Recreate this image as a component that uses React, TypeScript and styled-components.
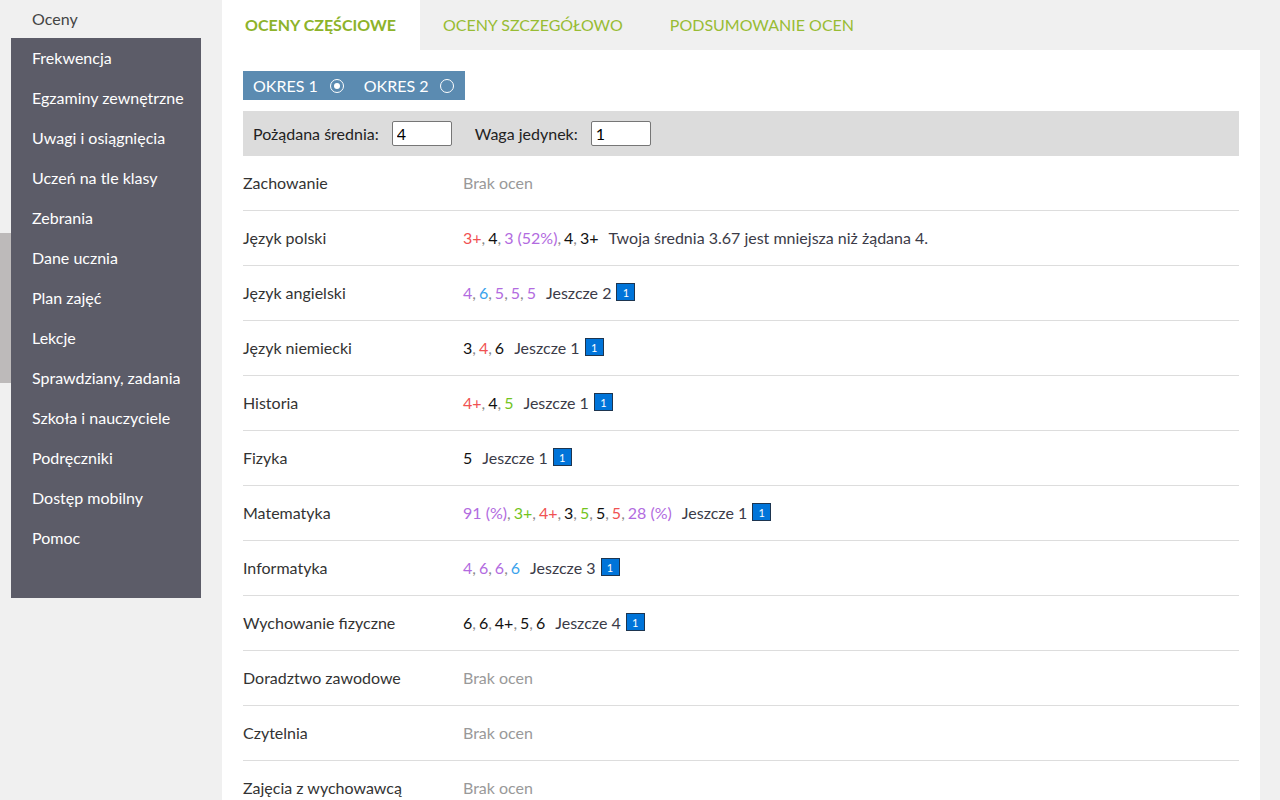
import React from "react";
import styled, { createGlobalStyle } from "styled-components";

const Global = createGlobalStyle`
  html, body { margin: 0; padding: 0; background: #f0f0f0; }
  body { font-family: Lato, "Noto Sans", Arial, sans-serif; color: #333; }
  * { box-sizing: border-box; }
`;

const Page = styled.div`
  display: flex;
  align-items: flex-start;
  min-height: 800px;
`;

const SideWrap = styled.div`
  display: flex;
  width: 222px;
  flex-shrink: 0;
`;

const Handle = styled.div`
  width: 11px;
  height: 150px;
  margin-top: 233px;
  background: #bdbaba;
  flex-shrink: 0;
`;

const Menu = styled.nav`
  width: 190px;
  display: flex;
  flex-direction: column;
`;

const ActiveItem = styled.div`
  height: 38px;
  display: flex;
  align-items: center;
  padding: 0 0 2px 21px;
  font-size: 16px;
  color: #444;
`;

const DarkBlock = styled.div`
  background: #5c5c68;
  padding-bottom: 40px;
  display: flex;
  flex-direction: column;
`;

const MenuItem = styled.div`
  height: 40px;
  display: flex;
  align-items: center;
  padding: 0 0 2px 21px;
  font-size: 16px;
  color: #fff;
`;

const Main = styled.main`
  width: 1038px;
  display: flex;
  flex-direction: column;
`;

const Tabs = styled.div`
  display: flex;
  height: 50px;
`;

const Tab = styled.div<{ $active?: boolean }>`
  height: 50px;
  display: flex;
  align-items: center;
  padding: 0 24px 2px 23px;
  font-size: 16px;
  text-transform: uppercase;
  color: ${(p) => (p.$active ? "#8db32a" : "#98bc34")};
  font-weight: ${(p) => (p.$active ? 700 : 400)};
  background: ${(p) => (p.$active ? "#fff" : "transparent")};
`;

const Panel = styled.div`
  background: #fff;
  padding: 21px 21px 0 21px;
  display: flex;
  flex-direction: column;
`;

const OkresBar = styled.div`
  align-self: flex-start;
  background: #5b8bb1;
  height: 29px;
  display: flex;
  align-items: center;
  padding: 0 11px 0 10px;
  gap: 20px;
  color: #fff;
  font-size: 16px;
`;

const Okres = styled.label`
  display: flex;
  align-items: center;
  gap: 12px;
`;

const Radio = styled.span<{ $checked?: boolean }>`
  width: 14px;
  height: 14px;
  border-radius: 50%;
  border: 1.6px solid #fff;
  display: flex;
  align-items: center;
  justify-content: center;
  &::after {
    content: "";
    width: 6px;
    height: 6px;
    border-radius: 50%;
    background: ${(p) => (p.$checked ? "#fff" : "transparent")};
  }
`;

const FilterBar = styled.div`
  margin-top: 11px;
  background: #dcdcdc;
  height: 45px;
  display: flex;
  align-items: center;
  padding: 0 10px;
  font-size: 16px;
  color: #222;
`;

const Field = styled.label`
  display: flex;
  align-items: center;
  gap: 13px;
  margin-right: 23px;
`;

const Input = styled.input`
  width: 60px;
  height: 25px;
  border: 1px solid #767676;
  border-radius: 2px;
  background: #fff;
  font-family: Lato, Arial, sans-serif;
  font-size: 16px;
  padding: 0 4px;
  color: #000;
`;

const Row = styled.div`
  display: flex;
  align-items: center;
  height: 55px;
  padding-bottom: 2px;
  border-bottom: 1px solid #dddddd;
  font-size: 16px;
`;

const Subject = styled.div`
  width: 220px;
  flex-shrink: 0;
  color: #333;
`;

const Grades = styled.div`
  display: flex;
  align-items: center;
`;

const Grade = styled.span<{ $c: string }>`
  color: ${(p) => p.$c};
`;

const Sep = styled.span`
  color: #8a8a8a;
  margin-right: 3px;
`;

const Info = styled.span`
  color: #3b3b48;
  margin-left: 10px;
`;

const Empty = styled.span`
  color: #999;
`;

const Badge = styled.span`
  margin-left: 5px;
  width: 19px;
  height: 18px;
  background: #0074d9;
  border: 1px solid #1d3550;
  color: #fff;
  font-size: 11px;
  display: inline-flex;
  align-items: center;
  justify-content: center;
  line-height: 1;
`;

const R = "#f05252";
const K = "#111";
const P = "#b26be0";
const B = "#3aa3ec";
const G = "#73c41d";

type G_ = [string, string];
type Subj = { name: string; grades?: G_[]; info?: string; badge?: boolean };

const subjects: Subj[] = [
  { name: "Zachowanie" },
  {
    name: "Język polski",
    grades: [["3+", R], ["4", K], ["3 (52%)", P], ["4", K], ["3+", K]],
    info: "Twoja średnia 3.67 jest mniejsza niż żądana 4.",
  },
  { name: "Język angielski", grades: [["4", P], ["6", B], ["5", P], ["5", P], ["5", P]], info: "Jeszcze 2", badge: true },
  { name: "Język niemiecki", grades: [["3", K], ["4", R], ["6", K]], info: "Jeszcze 1", badge: true },
  { name: "Historia", grades: [["4+", R], ["4", K], ["5", G]], info: "Jeszcze 1", badge: true },
  { name: "Fizyka", grades: [["5", K]], info: "Jeszcze 1", badge: true },
  {
    name: "Matematyka",
    grades: [["91 (%)", P], ["3+", G], ["4+", R], ["3", K], ["5", G], ["5", K], ["5", R], ["28 (%)", P]],
    info: "Jeszcze 1",
    badge: true,
  },
  { name: "Informatyka", grades: [["4", P], ["6", P], ["6", P], ["6", B]], info: "Jeszcze 3", badge: true },
  { name: "Wychowanie fizyczne", grades: [["6", K], ["6", K], ["4+", K], ["5", K], ["6", K]], info: "Jeszcze 4", badge: true },
  { name: "Doradztwo zawodowe" },
  { name: "Czytelnia" },
  { name: "Zajęcia z wychowawcą" },
  { name: "Religia" },
];

const menu = [
  "Frekwencja",
  "Egzaminy zewnętrzne",
  "Uwagi i osiągnięcia",
  "Uczeń na tle klasy",
  "Zebrania",
  "Dane ucznia",
  "Plan zajęć",
  "Lekcje",
  "Sprawdziany, zadania",
  "Szkoła i nauczyciele",
  "Podręczniki",
  "Dostęp mobilny",
  "Pomoc",
];

export default function App() {
  return (
    <>
      <Global />
      <Page>
        <SideWrap>
          <Handle />
          <Menu>
            <ActiveItem>Oceny</ActiveItem>
            <DarkBlock>
              {menu.map((m) => (
                <MenuItem key={m}>{m}</MenuItem>
              ))}
            </DarkBlock>
          </Menu>
        </SideWrap>
        <Main>
          <Tabs>
            <Tab $active>Oceny częściowe</Tab>
            <Tab>Oceny szczegółowo</Tab>
            <Tab>Podsumowanie ocen</Tab>
          </Tabs>
          <Panel>
            <OkresBar>
              <Okres>
                OKRES 1 <Radio $checked />
              </Okres>
              <Okres>
                OKRES 2 <Radio />
              </Okres>
            </OkresBar>
            <FilterBar>
              <Field>
                Pożądana średnia:
                <Input defaultValue="4" />
              </Field>
              <Field>
                Waga jedynek:
                <Input defaultValue="1" />
              </Field>
            </FilterBar>
            {subjects.map((s) => (
              <Row key={s.name}>
                <Subject>{s.name}</Subject>
                <Grades>
                  {s.grades ? (
                    <>
                      {s.grades.map(([g, c], i) => (
                        <React.Fragment key={i}>
                          <Grade $c={c}>{g}</Grade>
                          {i < s.grades!.length - 1 && <Sep>,</Sep>}
                        </React.Fragment>
                      ))}
                      {s.info && <Info>{s.info}</Info>}
                      {s.badge && <Badge>1</Badge>}
                    </>
                  ) : (
                    <Empty>Brak ocen</Empty>
                  )}
                </Grades>
              </Row>
            ))}
          </Panel>
        </Main>
      </Page>
    </>
  );
}
